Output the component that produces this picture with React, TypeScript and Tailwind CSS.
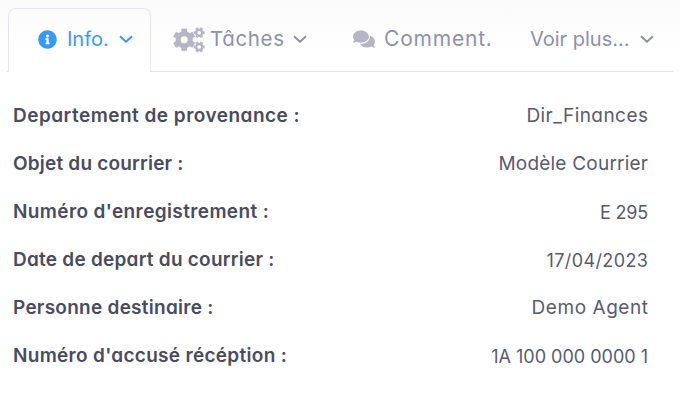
import React from "react";
import { FaComments, FaInfoCircle } from "react-icons/fa";

const rows = [
  { label: "Departement de provenance :", value: "Dir_Finances", lt: "tracking-[0.48px]", vt: "tracking-[0.45px] -mr-[0.45px] text-[19px]" },
  { label: "Objet du courrier :", value: "Modèle Courrier", lt: "tracking-[0.2px]", vt: "tracking-[0.22px] -mr-[0.22px] text-[19px]" },
  { label: "Numéro d'enregistrement :", value: "E 295", lt: "tracking-[0.38px]", vt: "tracking-[-0.2px]" },
  { label: "Date de depart du courrier :", value: "17/04/2023", lt: "tracking-[0.24px]", vt: "tracking-[0.4px] -mr-[0.4px]" },
  { label: "Personne destinaire :", value: "Demo Agent", lt: "tracking-[0.26px]", vt: "tracking-[0.55px] -mr-[0.55px] text-[19px]" },
  { label: "Numéro d'accusé récéption :", value: "1A 100 000 0000 1", lt: "tracking-[0.3px]", vt: "tracking-[0px]" },
];

function Chevron({ className = "" }: { className?: string }) {
  return (
    <svg viewBox="0 0 14 8" className={"h-2 w-3.5 shrink-0 " + className} fill="none" stroke="currentColor" strokeWidth="2">
      <path d="M1 1.2 7 6.8 13 1.2" strokeLinejoin="round" />
    </svg>
  );
}

type GearProps = { x: number; y: number; ring: number; band: number; tip: number; tooth: number; turn: number };

function Gear({ x, y, ring, band, tip, tooth, turn }: GearProps) {
  return (
    <g transform={`translate(${x} ${y})`} fill="none" stroke="currentColor">
      <circle r={ring} strokeWidth={band} />
      {[0, 60, 120, 180, 240, 300].map((a) => (
        <path key={a} d={`M0 ${-ring}V${-tip}`} strokeWidth={tooth} transform={`rotate(${a + turn})`} />
      ))}
    </g>
  );
}

function Gears() {
  return (
    <svg viewBox="0 0 32 26" className="mt-px h-[26px] w-8 shrink-0 text-[#b5b5c3]">
      <Gear x={11.2} y={12.7} ring={6.1} band={5.2} tip={11.1} tooth={5.8} turn={0} />
      <Gear x={26.2} y={5.7} ring={3} band={2.4} tip={5.4} tooth={2.9} turn={30} />
      <Gear x={26.2} y={20} ring={3} band={2.4} tip={5.4} tooth={2.9} turn={30} />
    </svg>
  );
}

export default function App() {
  return (
    <main className="h-[404px] w-[680px] overflow-hidden bg-white bg-linear-to-b from-[#fafafa] to-white to-[50px] pt-2 font-['Inter',sans-serif] text-[18px] text-[#585b70] [font-feature-settings:'cv11','ss03']">
      <nav className="ml-[7px] flex h-16 w-[666px] text-[20px] text-[#8e91aa]">
        <div className="w-0.5 shrink-0 border-b border-[#e4e6ef]" />
        <div className="-ml-px flex w-[143px] shrink-0 items-center rounded-t-lg border border-b-0 border-[#e4e6ef] pb-[3px] pl-[29px] text-[#3699ff]">
          <FaInfoCircle className="size-[19px] shrink-0" />
          <span className="ml-2.5 w-[43px] whitespace-nowrap">Info.</span>
          <Chevron className="ml-[9px]" />
        </div>
        <div className="flex flex-1 items-center border-b border-[#e4e6ef] pb-px pl-[22px]">
          <Gears />
          <span className="ml-[5px] w-[73px] whitespace-nowrap text-[20.5px] tracking-[0.65px]">Tâches</span>
          <Chevron className="ml-2.5" />
          <FaComments className="ml-[46px] h-5 w-[22px] shrink-0 text-[#b5b5c3]" />
          <span className="ml-[9px] w-[109px] whitespace-nowrap text-[21px] tracking-[0.8px]">Comment.</span>
          <span className="ml-[37px] w-[101px] whitespace-nowrap">Voir plus...</span>
          <Chevron className="ml-[9px]" />
        </div>
      </nav>
      <dl className="mt-5 pl-[13px] pr-8">
        {rows.map((r) => (
          <div key={r.label} className="flex h-12 items-center justify-between whitespace-nowrap">
            <dt className={"text-[19px] font-semibold text-[#494c60] " + r.lt}>{r.label}</dt>
            <dd className={r.vt}>{r.value}</dd>
          </div>
        ))}
      </dl>
    </main>
  );
}
